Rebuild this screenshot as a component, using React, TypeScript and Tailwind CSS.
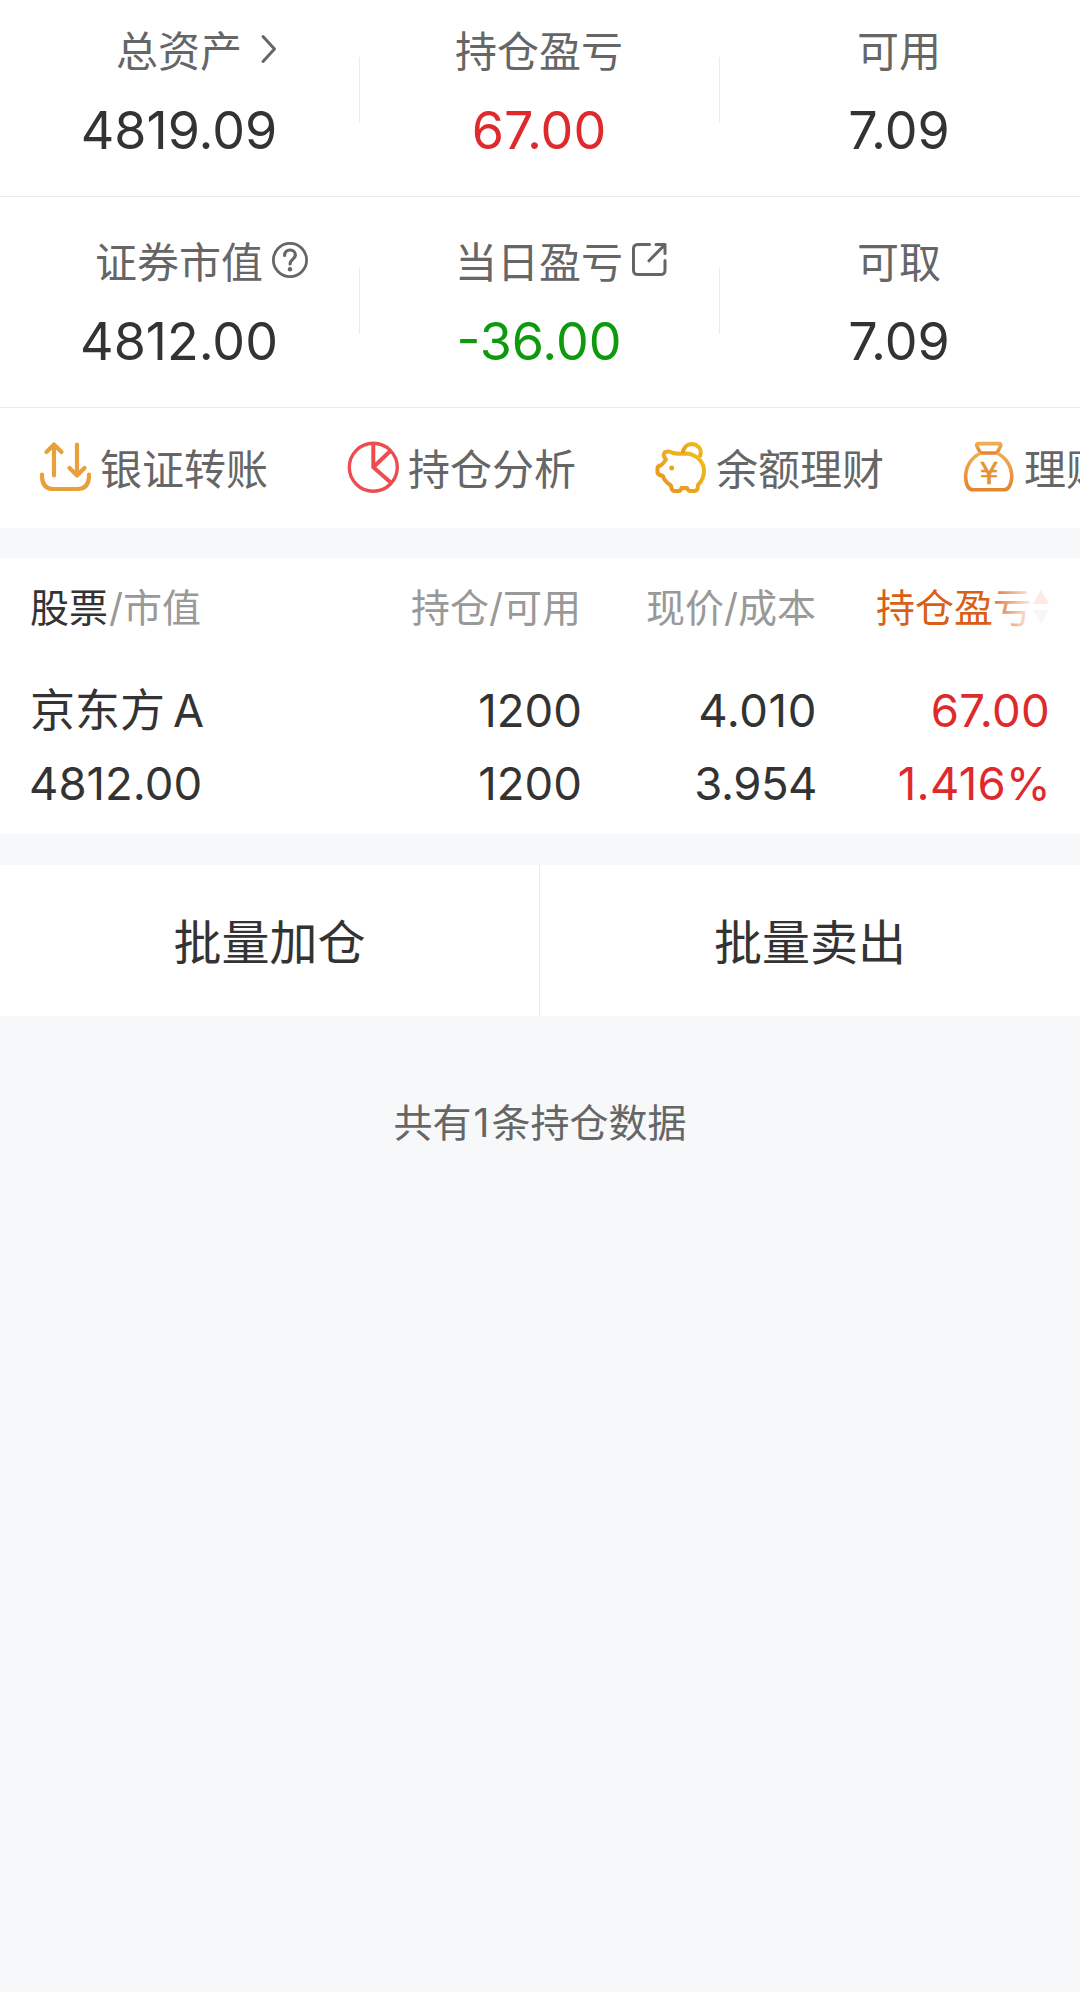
import type { ReactNode } from 'react';
import clsx from 'clsx';

interface Stat {
  label: string;
  value: string;
  valueClass?: string;
  icon?: ReactNode;
}

interface Holding {
  name: string;
  suffix: string;
  marketValue: string;
  amount: string;
  available: string;
  price: string;
  cost: string;
  profit: string;
  profitRate: string;
}

function ChevronIcon() {
  return (
    <svg className="absolute left-full top-[9px] ml-[17px] h-9 w-6" viewBox="0 0 24 36" fill="none" stroke="currentColor" strokeWidth="3" strokeLinecap="round" strokeLinejoin="round">
      <path d="M4 5.5L15.500 18L4 30.500" />
    </svg>
  );
}

function HelpIcon() {
  return (
    <svg className="absolute left-full top-[9px] ml-[9px] h-9 w-9" viewBox="0 0 36 36" fill="none" stroke="currentColor" strokeWidth="2.8" strokeLinecap="round">
      <circle cx="18" cy="18" r="16.600" />
      <path d="M12.600 13.400c0-3.600 2.400-5.400 5.400-5.400s5.400 2 5.400 5c0 4-5.400 4.400-5.400 9" strokeWidth="3.200" />
      <circle cx="18" cy="27.300" r="2.200" fill="currentColor" stroke="none" />
    </svg>
  );
}

function ShareIcon() {
  return (
    <svg className="absolute left-full top-[9px] ml-2 h-9 w-9" viewBox="0 0 36 36" fill="none" stroke="currentColor" strokeWidth="3" strokeLinecap="round" strokeLinejoin="round">
      <path d="M18.500 2.500H6.500a4 4 0 0 0-4 4v22a4 4 0 0 0 4 4h23.500a4 4 0 0 0 4-4V18.500" />
      <path d="M25 2.500H34V11.500M33.500 3L18 18.800" />
    </svg>
  );
}

function TransferIcon() {
  return (
    <svg className="size-[52px]" viewBox="0 0 52 52" fill="none" stroke="#e8a03a" strokeWidth="4.2" strokeLinecap="round" strokeLinejoin="round">
      <path d="M15 34.500V4M7.500 11L15 3.500L22.500 11" />
      <path d="M38 3.500V34M30.500 27L38 34.500L45.500 27" />
      <path d="M3 33.500V36.500Q4 48 14 48H39Q49 48 50 36.500V33.500" />
    </svg>
  );
}

function PieIcon() {
  return (
    <svg className="size-[52px]" viewBox="0 0 52 52" fill="none" stroke="#ec4d50" strokeWidth="3.4" strokeLinejoin="round">
      <circle cx="26.300" cy="26.300" r="24" />
      <path d="M26.300 2V26.300L43.500 9.700M26.300 26.300L44 41.800" strokeWidth="4" />
    </svg>
  );
}

function PiggyIcon() {
  return (
    <svg className="size-[52px]" viewBox="0 0 52 52" fill="none" stroke="url(#piggy)" strokeWidth="4" strokeLinejoin="round">
      <defs>
        <linearGradient id="piggy" x1="1" y1="0" x2="0" y2="1">
          <stop offset="0" stopColor="#f0bf1e" />
          <stop offset="1" stopColor="#e8921f" />
        </linearGradient>
      </defs>
      <path d="M9.500 11.500Q13.500 9.500 18 12Q25 13.500 32 12.400Q38.500 13 43.500 17.500Q49.500 23.500 49 30Q49 38 43 44Q43 50 39.500 50H35Q33.500 50 32 47H26.500Q25.500 50 24 50H19.500Q16.500 50 16 44.500Q9.500 40.500 8 35Q3 34 2.500 31.500V27.500Q2.500 25 5.500 24.500Q8.500 22.500 11 18.500Q7.500 14.500 9.500 11.500Z" />
      <path d="M27.500 12C29 6 32 3 36.500 3C42.500 3 48 8 44.800 16" />
      <circle cx="16.700" cy="27" r="2.500" fill="#eaa51f" stroke="none" />
    </svg>
  );
}

function MoneyBagIcon() {
  return (
    <svg className="size-[52px]" viewBox="0 0 52 52" fill="none" stroke="url(#bag)" strokeWidth="3.6" strokeLinejoin="round">
      <defs>
        <linearGradient id="bag" x1="0" y1="0" x2="0" y2="1">
          <stop offset="0" stopColor="#efae52" />
          <stop offset="1" stopColor="#e5852c" />
        </linearGradient>
      </defs>
      <path d="M15.500 2.600H36Q38.600 2.600 37.600 5L34 12H17.500L13.800 5Q13 2.600 15.500 2.600Z" />
      <path d="M17.500 12Q2.600 20 2.600 36.500Q3.600 48.800 10 48.800H41Q47.400 48.800 48.800 36.500Q48.800 20 34 12" />
      <text x="26" y="43" textAnchor="middle" fontSize="30" fontFamily="DejaVu Sans, sans-serif" fill="#e8912f" stroke="#e8912f" strokeWidth="0.6">¥</text>
    </svg>
  );
}

function SortArrows() {
  return (
    <svg className="h-[34px] w-[18px]" viewBox="0 0 18 34">
      <path d="M9 0L17 14H1Z" fill="#fdeae2" />
      <path d="M1 20H17L9 34Z" fill="#f6f6f6" />
    </svg>
  );
}

const summaryRows: Stat[][] = [
  [
    { label: '总资产', value: '4819.09', icon: <ChevronIcon /> },
    { label: '持仓盈亏', value: '67.00', valueClass: 'text-[#df2a2d]' },
    { label: '可用', value: '7.09' },
  ],
  [
    { label: '证券市值', value: '4812.00', icon: <HelpIcon /> },
    { label: '当日盈亏', value: '-36.00', valueClass: 'text-[#0d9a0d]', icon: <ShareIcon /> },
    { label: '可取', value: '7.09' },
  ],
];

const shortcuts = [
  { label: '银证转账', icon: <TransferIcon /> },
  { label: '持仓分析', icon: <PieIcon /> },
  { label: '余额理财', icon: <PiggyIcon /> },
  { label: '理财', icon: <MoneyBagIcon /> },
];

const holdings: Holding[] = [
  {
    name: '京东方',
    suffix: 'A',
    marketValue: '4812.00',
    amount: '1200',
    available: '1200',
    price: '4.010',
    cost: '3.954',
    profit: '67.00',
    profitRate: '1.416%',
  },
];

function SummaryRow({ stats, first }: { stats: Stat[]; first?: boolean }) {
  return (
    <div className={clsx('flex border-b border-[#ebebeb]', first ? 'h-[197px] pt-[22px]' : 'h-[211px] pt-[36px]')}>
      {stats.map((stat, i) => (
        <div key={stat.label} className="flex flex-1">
          <div className="flex flex-1 flex-col items-center pr-0.5">
            <div className="relative text-[42px] leading-[60px] text-[#666]">
              {stat.label}
              {stat.icon}
            </div>
            <div className={clsx('mt-[19px] text-[52px] leading-[60px]', stat.valueClass)}>{stat.value}</div>
          </div>
          {i < stats.length - 1 && <div className="-ml-px mt-[35px] h-[66px] w-px bg-[#ebebeb]" />}
        </div>
      ))}
    </div>
  );
}

function HoldingsTable() {
  return (
    <section className="h-[276px] bg-white px-[30px]">
      <div className="grid h-[98px] grid-cols-[250px_301px_235px_234px] items-center text-[39px] leading-none text-[#999]">
        <div>
          <span className="text-[#333]">股票</span>
          <span className="pl-px">/市值</span>
        </div>
        <div className="text-right">持仓/可用</div>
        <div className="text-right">现价/成本</div>
        <div className="relative flex items-center justify-end text-[#d95f14]">
          持仓盈亏
          <SortArrows />
          <div className="absolute right-[18px] h-12 w-[46px] bg-linear-to-r from-white/0 to-white/90" />
        </div>
      </div>
      {holdings.map((h) => (
        <div key={h.name} className="mt-[18px] grid grid-cols-[250px_302px_235px_233px] text-[45.500px] leading-[73px]">
          <div>
            <div className="flex gap-2 text-[45px]">
              <span>{h.name}</span>
              <span>{h.suffix}</span>
            </div>
            <div className="-ml-px">{h.marketValue}</div>
          </div>
          <div className="text-right">
            <div>{h.amount}</div>
            <div>{h.available}</div>
          </div>
          <div className="text-right">
            <div className="tracking-[0.6px]">{h.price}</div>
            <div className="tracking-[-0.5px]">{h.cost}</div>
          </div>
          <div className="text-right text-[#df2a2d]">
            <div className="tracking-[0.3px]">{h.profit}</div>
            <div className="-mr-px tracking-[0.3px]">{h.profitRate}</div>
          </div>
        </div>
      ))}
    </section>
  );
}

export default function App() {
  return (
    <div className="min-h-[1992px] w-[1080px] overflow-hidden bg-[#f7f8fa] font-['Inter','Noto_Sans_CJK_SC',sans-serif] text-[#333]">
      <section className="bg-white">
        <SummaryRow stats={summaryRows[0]} first />
        <SummaryRow stats={summaryRows[1]} />
        <div className="flex h-[120px] gap-[79px] overflow-hidden pl-[39px] text-[42px] leading-[60px] text-[#666]">
          {shortcuts.map((item) => (
            <div key={item.label} className="flex h-[118px] shrink-0 items-center gap-[9px] whitespace-nowrap">
              {item.icon}
              <span className="pt-[5px]">{item.label}</span>
            </div>
          ))}
        </div>
      </section>

      <div className="h-[30px]" />
      <HoldingsTable />
      <div className="h-[31px]" />

      <div className="grid h-[151px] grid-cols-2 bg-white text-[48px]">
        <button className="border-r border-[#ebebeb] pt-1">批量加仓</button>
        <button className="pt-1">批量卖出</button>
      </div>

      <p className="mt-[77px] text-center text-[39px] leading-[60px] text-[#666]">
        共有<span className="px-[2px]">1</span>条持仓数据
      </p>
    </div>
  );
}
